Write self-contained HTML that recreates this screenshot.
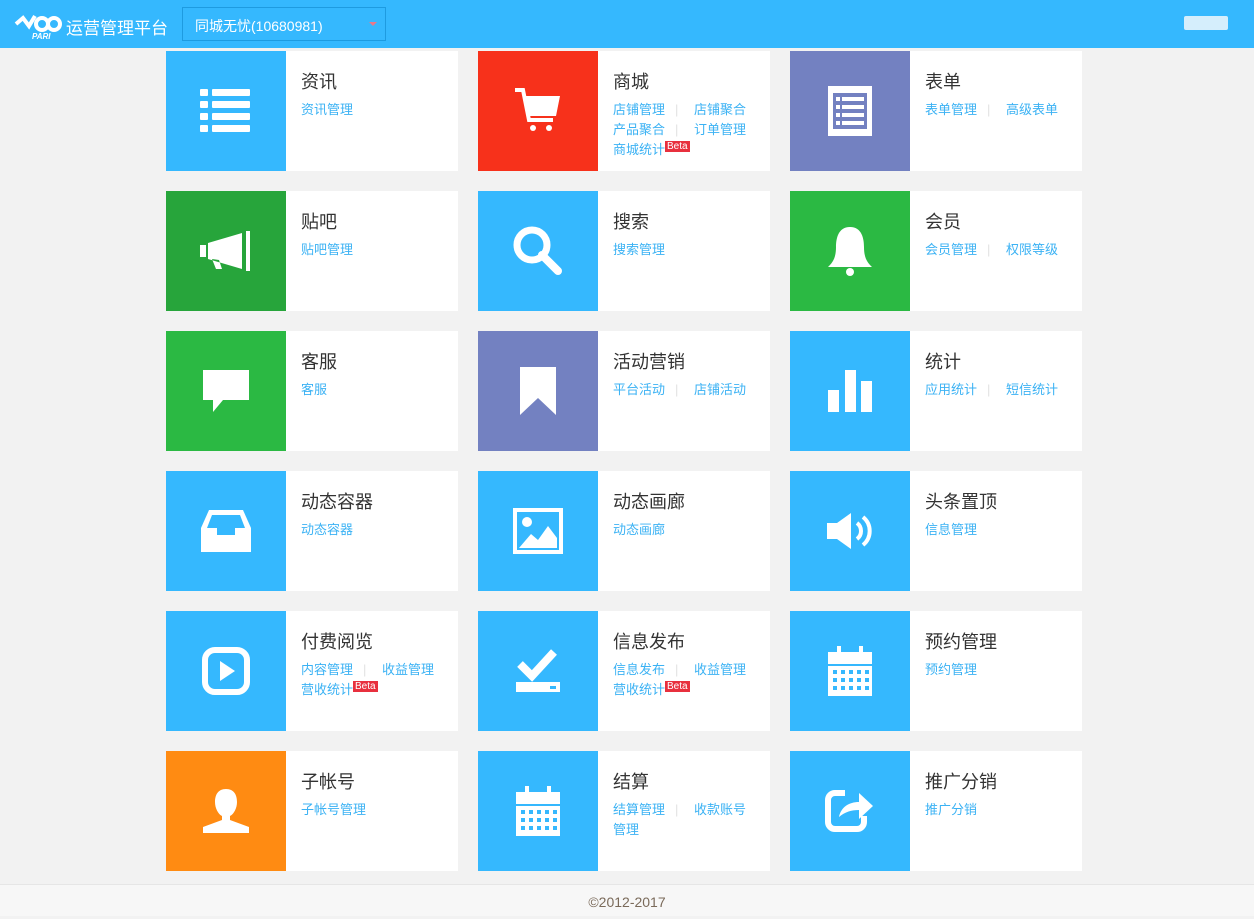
<!DOCTYPE html><html><head><meta charset="utf-8"><style>
*{margin:0;padding:0;box-sizing:border-box}
body{width:1254px;height:916px;background:#f2f2f2;font-family:"Liberation Sans","Noto Sans CJK SC",sans-serif;position:relative;overflow:hidden}
.hd{height:48px;background:#35b8fe;position:relative;color:#fff}
.logo{position:absolute;left:14px;top:10px}
.ttl{position:absolute;left:66px;top:14px;font-size:17px}
.sel{position:absolute;left:182px;top:7px;width:204px;height:34px;border:1px solid #1e9be0;font-size:14px;padding:8px 12px}
.sel i{position:absolute;right:8px;top:14px;border:4px solid transparent;border-top-color:#e8788a}
.user{position:absolute;right:26px;top:16px;width:44px;height:14px;background:#d5eefc;border-radius:2px}
.card{position:absolute;width:292px;height:120px;background:#fff}
.ic{position:absolute;left:0;top:0;width:120px;height:120px;display:flex;align-items:center;justify-content:center}
.t{position:absolute;left:135px;top:17px;font-size:18px;color:#333}
.l{position:absolute;left:135px;top:49px;width:150px;font-size:13px;line-height:20px;color:#3bb2f4}
.l span{display:inline-block;width:81px}
.sep{color:#e2e2e2;font-style:normal;margin-left:10px}
b.beta{font-weight:normal;font-size:10px;background:#e8303e;color:#fff;padding:0 2px;vertical-align:5px;line-height:11px}
.ft{position:absolute;left:0;top:884px;width:1254px;height:32px;background:#f7f7f7;border-top:1px solid #e6e6e6;text-align:center;color:#7a6a5a;font-size:14px;line-height:34px}
</style></head><body>
<div class="hd">
<svg class="logo" width="50" height="30" viewBox="0 0 50 30"><path d="M2 14 L9 8 L15 16 L21 6 M22 14a6 6 0 1 0 12 0a6 6 0 1 0-12 0 M34 14a6 6 0 1 0 12 0a6 6 0 1 0-12 0" stroke="#fff" stroke-width="4" fill="none"/><text x="18" y="29" fill="#fff" font-size="8" font-style="italic" font-weight="bold" font-family="Liberation Sans">PARI</text></svg>
<div class="ttl">运营管理平台</div>
<div class="sel">同城无忧(10680981)<i></i></div>
<div class="user"></div>
</div>

<div class="card" style="left:166px;top:51px"><div class="ic" style="background:#35b8fe"><svg width="52" height="48"><g fill="#fff"><rect x="0" y="2" width="8" height="7" rx="1"/><rect x="12" y="2" width="38" height="7" rx="1"/><rect x="0" y="14" width="8" height="7" rx="1"/><rect x="12" y="14" width="38" height="7" rx="1"/><rect x="0" y="26" width="8" height="7" rx="1"/><rect x="12" y="26" width="38" height="7" rx="1"/><rect x="0" y="38" width="8" height="7" rx="1"/><rect x="12" y="38" width="38" height="7" rx="1"/></g></svg></div><div class="t">资讯</div><div class="l">资讯管理</div></div>
<div class="card" style="left:478px;top:51px"><div class="ic" style="background:#f7311b"><svg width="50" height="50"><path d="M2 4h8l6 30h24" stroke="#fff" stroke-width="4" fill="none"/><path d="M11 10h36l-4 20H15z" fill="#fff"/><circle cx="20" cy="42" r="3" fill="#fff"/><circle cx="36" cy="42" r="3" fill="#fff"/></svg></div><div class="t">商城</div><div class="l"><span>店铺管理<i class="sep">|</i></span>店铺聚合<br><span>产品聚合<i class="sep">|</i></span>订单管理<br>商城统计<b class="beta">Beta</b></div></div>
<div class="card" style="left:790px;top:51px"><div class="ic" style="background:#7381c1"><svg width="46" height="52"><rect x="1" y="1" width="44" height="50" fill="#fff"/><g fill="#7381c1"><rect x="6" y="8" width="34" height="36"/></g><g fill="#fff"><rect x="9" y="12" width="4" height="4"/><rect x="15" y="12" width="22" height="4"/><rect x="9" y="20" width="4" height="4"/><rect x="15" y="20" width="22" height="4"/><rect x="9" y="28" width="4" height="4"/><rect x="15" y="28" width="22" height="4"/><rect x="9" y="36" width="4" height="4"/><rect x="15" y="36" width="22" height="4"/></g></svg></div><div class="t">表单</div><div class="l"><span>表单管理<i class="sep">|</i></span>高级表单</div></div>

<div class="card" style="left:166px;top:191px"><div class="ic" style="background:#27a53b"><svg width="56" height="44"><path d="M2 16h6v12H2z M10 14 L44 4 V40 L10 30z M14 30 L18 40 h6 l-3-9z M48 2h4v40h-4z" fill="#fff"/></svg></div><div class="t">贴吧</div><div class="l">贴吧管理</div></div>
<div class="card" style="left:478px;top:191px"><div class="ic" style="background:#35b8fe"><svg width="52" height="52"><circle cx="20" cy="20" r="15" stroke="#fff" stroke-width="7" fill="none"/><path d="M30 30 L46 46" stroke="#fff" stroke-width="8" stroke-linecap="round"/></svg></div><div class="t">搜索</div><div class="l">搜索管理</div></div>
<div class="card" style="left:790px;top:191px"><div class="ic" style="background:#2bb943"><svg width="48" height="52"><path d="M24 2 C12 2 10 14 10 22 C10 34 6 38 2 42 H46 C42 38 38 34 38 22 C38 14 36 2 24 2z" fill="#fff"/><circle cx="24" cy="47" r="4" fill="#fff"/></svg></div><div class="t">会员</div><div class="l"><span>会员管理<i class="sep">|</i></span>权限等级</div></div>

<div class="card" style="left:166px;top:331px"><div class="ic" style="background:#2bb943"><svg width="50" height="46"><path d="M2 2h46v30H22l-10 12v-12H2z" fill="#fff"/></svg></div><div class="t">客服</div><div class="l">客服</div></div>
<div class="card" style="left:478px;top:331px"><div class="ic" style="background:#7381c1"><svg width="38" height="50"><path d="M1 1h36v48L19 32 1 49z" fill="#fff"/></svg></div><div class="t">活动营销</div><div class="l"><span>平台活动<i class="sep">|</i></span>店铺活动</div></div>
<div class="card" style="left:790px;top:331px"><div class="ic" style="background:#35b8fe"><svg width="46" height="46"><rect x="1" y="22" width="11" height="22" fill="#fff"/><rect x="18" y="2" width="11" height="42" fill="#fff"/><rect x="34" y="13" width="11" height="31" fill="#fff"/></svg></div><div class="t">统计</div><div class="l"><span>应用统计<i class="sep">|</i></span>短信统计</div></div>

<div class="card" style="left:166px;top:471px"><div class="ic" style="background:#35b8fe"><svg width="50" height="46"><path d="M8 2h34l8 18v24H0V20z" fill="#fff"/><path d="M11 7h28l5 13H34v7H16v-7H6z" fill="#35b8fe"/></svg></div><div class="t">动态容器</div><div class="l">动态容器</div></div>
<div class="card" style="left:478px;top:471px"><div class="ic" style="background:#35b8fe"><svg width="50" height="46"><rect x="2" y="2" width="46" height="42" stroke="#fff" stroke-width="4" fill="none"/><circle cx="14" cy="14" r="5" fill="#fff"/><path d="M6 40 L18 26 L25 32 L35 18 L44 30 V40z" fill="#fff"/></svg></div><div class="t">动态画廊</div><div class="l">动态画廊</div></div>
<div class="card" style="left:790px;top:471px"><div class="ic" style="background:#35b8fe"><svg width="50" height="40"><path d="M2 12h10l14-10v36L12 28H2z" fill="#fff"/><path d="M32 12a10 10 0 0 1 0 16 M38 6a18 18 0 0 1 0 28" stroke="#fff" stroke-width="4" fill="none"/></svg></div><div class="t">头条置顶</div><div class="l">信息管理</div></div>

<div class="card" style="left:166px;top:611px"><div class="ic" style="background:#35b8fe"><svg width="48" height="48"><rect x="3" y="3" width="42" height="42" rx="10" stroke="#fff" stroke-width="6" fill="none"/><path d="M18 14 L33 24 L18 34z" fill="#fff"/></svg></div><div class="t">付费阅览</div><div class="l"><span>内容管理<i class="sep">|</i></span>收益管理<br>营收统计<b class="beta">Beta</b></div></div>
<div class="card" style="left:478px;top:611px"><div class="ic" style="background:#35b8fe"><svg width="48" height="46"><path d="M6 16 L18 28 L40 4" stroke="#fff" stroke-width="8" fill="none"/><rect x="2" y="34" width="44" height="10" fill="#fff"/><rect x="36" y="38" width="6" height="3" fill="#35b8fe"/></svg></div><div class="t">信息发布</div><div class="l"><span>信息发布<i class="sep">|</i></span>收益管理<br>营收统计<b class="beta">Beta</b></div></div>
<div class="card" style="left:790px;top:611px"><div class="ic" style="background:#35b8fe"><svg width="46" height="50"><rect x="1" y="6" width="44" height="12" fill="#fff"/><rect x="10" y="0" width="4" height="10" fill="#fff"/><rect x="32" y="0" width="4" height="10" fill="#fff"/><rect x="1" y="20" width="44" height="30" fill="#fff"/><g fill="#35b8fe"><rect x="6" y="24" width="4" height="4"/><rect x="14" y="24" width="4" height="4"/><rect x="22" y="24" width="4" height="4"/><rect x="30" y="24" width="4" height="4"/><rect x="38" y="24" width="4" height="4"/><rect x="6" y="32" width="4" height="4"/><rect x="14" y="32" width="4" height="4"/><rect x="22" y="32" width="4" height="4"/><rect x="30" y="32" width="4" height="4"/><rect x="38" y="32" width="4" height="4"/><rect x="6" y="40" width="4" height="4"/><rect x="14" y="40" width="4" height="4"/><rect x="22" y="40" width="4" height="4"/><rect x="30" y="40" width="4" height="4"/><rect x="38" y="40" width="4" height="4"/></g></svg></div><div class="t">预约管理</div><div class="l">预约管理</div></div>

<div class="card" style="left:166px;top:751px"><div class="ic" style="background:#ff8b12"><svg width="50" height="48"><path d="M25 2c-8 0-11 6-11 13 0 6 3 12 7 14v4L2 40v6h46v-6l-19-7v-4c4-2 7-8 7-14 0-7-3-13-11-13z" fill="#fff"/></svg></div><div class="t">子帐号</div><div class="l">子帐号管理</div></div>
<div class="card" style="left:478px;top:751px"><div class="ic" style="background:#35b8fe"><svg width="46" height="50"><rect x="1" y="6" width="44" height="12" fill="#fff"/><rect x="10" y="0" width="4" height="10" fill="#fff"/><rect x="32" y="0" width="4" height="10" fill="#fff"/><rect x="1" y="20" width="44" height="30" fill="#fff"/><g fill="#35b8fe"><rect x="6" y="24" width="4" height="4"/><rect x="14" y="24" width="4" height="4"/><rect x="22" y="24" width="4" height="4"/><rect x="30" y="24" width="4" height="4"/><rect x="38" y="24" width="4" height="4"/><rect x="6" y="32" width="4" height="4"/><rect x="14" y="32" width="4" height="4"/><rect x="22" y="32" width="4" height="4"/><rect x="30" y="32" width="4" height="4"/><rect x="38" y="32" width="4" height="4"/><rect x="6" y="40" width="4" height="4"/><rect x="14" y="40" width="4" height="4"/><rect x="22" y="40" width="4" height="4"/><rect x="30" y="40" width="4" height="4"/><rect x="38" y="40" width="4" height="4"/></g></svg></div><div class="t">结算</div><div class="l"><span>结算管理<i class="sep">|</i></span>收款账号<br>管理</div></div>
<div class="card" style="left:790px;top:751px"><div class="ic" style="background:#35b8fe"><svg width="50" height="48"><path d="M20 6H10a7 7 0 0 0-7 7v22a7 7 0 0 0 7 7h22a7 7 0 0 0 7-7v-6" stroke="#fff" stroke-width="6" fill="none"/><path d="M14 30c2-10 10-15 20-15v-9l14 13-14 13v-9c-8 0-14 2-20 7z" fill="#fff"/></svg></div><div class="t">推广分销</div><div class="l">推广分销</div></div>

<div class="ft">©2012-2017</div>
</body></html>
